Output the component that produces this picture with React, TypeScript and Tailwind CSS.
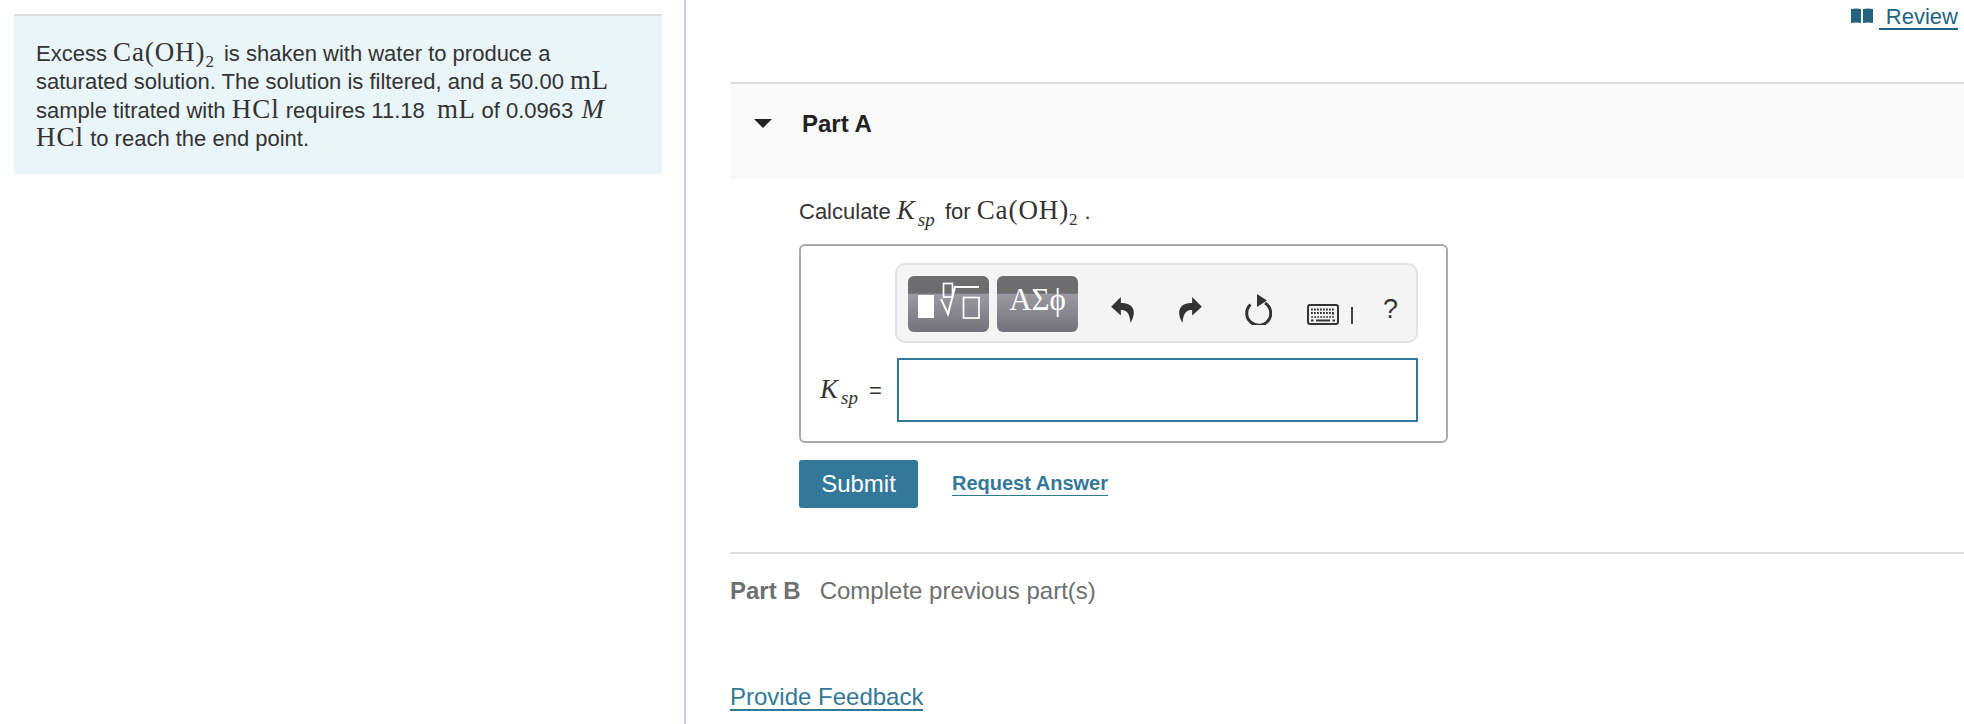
const Serif = ({ children, className = '' }: { children: React.ReactNode; className?: string }) => (
    <span className={`font-['Liberation_Serif',serif] leading-none ${className}`}>{children}</span>
)

const CaOH2 = () => (
    <Serif className="text-[27px] tracking-[0.9px]">
        Ca(OH)<sub className="text-[17px] align-[-2px] leading-none">2</sub>
    </Serif>
)

const Ksp = () => (
    <Serif className="italic text-[27px]">
        <span className="tracking-[3px]">K</span>
        <sub className="text-[19px] align-[-2px] leading-none">sp</sub>
    </Serif>
)

const Undo = ({ flip = false }: { flip?: boolean }) => (
    <svg viewBox="0 0 24 26" width="26" height="28" className={flip ? '-scale-x-100' : ''}>
        <path
            d="M10 1 L1 10 L10 18 V13 C15 13 18 15 19 25 C22.5 19 23 14 20.5 10.5 C18.5 7.5 14.5 6.5 10 6.5 Z"
            fill="#333"
        />
    </svg>
)

const Refresh = () => (
    <svg viewBox="0 0 28 32" width="28" height="32" fill="none">
        <path d="M6.5 11.5 A12 12 0 1 0 21 10" stroke="#333" strokeWidth="3" />
        <path d="M13 1 L23 7.5 L13 14 Z" fill="#333" />
    </svg>
)

const Keyboard = () => (
    <svg viewBox="0 0 32 21" width="32" height="21" fill="none">
        <rect x="1" y="1" width="30" height="19" rx="2" stroke="#333" strokeWidth="2" />
        <path d="M4 5.5 H28 M4 9 H28" stroke="#333" strokeWidth="1.8" strokeDasharray="1.8 1.2" />
        <path d="M26 9 V13 H4" stroke="#333" strokeWidth="1.6" strokeDasharray="1.8 1.2" />
        <path d="M9 16.5 H23 M4 16.5 H6.5 M25.5 16.5 H28" stroke="#333" strokeWidth="1.8" />
    </svg>
)

const Templates = () => (
    <svg viewBox="0 0 81 56" width="81" height="56" fill="none">
        <rect x="10" y="19" width="16" height="23" fill="#fff" />
        <rect x="35.5" y="7.5" width="9" height="13.5" stroke="#fff" strokeWidth="1.7" />
        <path d="M33 23 L40 38 L47 11 H71" stroke="#fff" strokeWidth="2" />
        <rect x="55.5" y="21.5" width="15.5" height="20.5" stroke="#fff" strokeWidth="1.7" />
    </svg>
)

const toolButton =
    'mt-[2px] flex h-[56px] w-[81px] rounded-[6px] bg-[linear-gradient(#6d6d70_0%,#6d6d70_31%,#9b9aa3_32%,#73737a_100%)]'

const App = () => (
    <div className="flex h-[724px] w-[1964px] overflow-hidden bg-white font-['Liberation_Sans',Arial,sans-serif] text-[22px] text-[#333]">
        <div className="w-[686px] shrink-0 border-r-2 border-[#c2d0e2] pl-[14px] pr-[22px] pt-[14px]">
            <div className="h-[160px] border-t-[2px] border-[#dddddd] bg-[#e9f5f8] pl-[22px] pt-[23px] leading-[28.4px] whitespace-nowrap">
                <p className="h-[28.4px]">
                    Excess <CaOH2 /> <span className="ml-[3px]">is shaken with water to produce a</span>
                </p>
                <p className="h-[28.4px]">
                    saturated solution. The solution is filtered, and a 50.00{' '}
                    <Serif className="text-[27px] tracking-[0.5px]">mL</Serif>
                </p>
                <p className="h-[28.4px]">
                    sample titrated with <Serif className="text-[27px] tracking-[1px]">HCl</Serif> requires 11.18{' '}
                    <Serif className="ml-[6px] text-[27px] tracking-[0.5px]">mL</Serif> of 0.0963{' '}
                    <Serif className="ml-[2px] italic text-[27px] tracking-[1px]">M</Serif>
                </p>
                <p className="h-[28.4px]">
                    <Serif className="text-[27px] tracking-[1px]">HCl</Serif> to reach the end point.
                </p>
            </div>
        </div>

        <div className="flex min-w-0 flex-1 flex-col">
            <div className="flex h-[82px] justify-end pr-[6px] pt-[6px]">
                <a className="flex h-[24px] items-center border-b-2 border-[#1f6482] text-[#1f6482] leading-none">
                    <svg viewBox="0 0 22 16" width="22" height="16" className="absolute -ml-[28px] mb-[3px]">
                        <path d="M0 1 Q5 0 10 1 V15 Q5 14 0 15 Z M12 1 Q17 0 22 1 V15 Q17 14 12 15 Z" fill="#24627e" />
                    </svg>
                    <span className="pl-[7px]">Review</span>
                </a>
            </div>

            <div className="ml-[44px] flex h-[97px] items-start border-t-2 border-[#dddddd] bg-[#f9f9f9] pl-[24px] pt-[22px] text-[24px]">
                <svg viewBox="0 0 18 9" width="18" height="9" className="mt-[13px]">
                    <path d="M0 0 H18 L9 9 Z" fill="#222" />
                </svg>
                <span className="ml-[30px] font-bold text-[#222]">Part A</span>
            </div>

            <div className="ml-[113px] w-[649px]">
                <p className="mt-[15px] h-[36px] leading-[36px] whitespace-nowrap">
                    Calculate <Ksp /> <span className="ml-1">for</span> <CaOH2 /> .
                </p>
                <div className="mt-[14px] h-[199px] rounded-[6px] border-2 border-[#aaaaaa] pl-[94px] pr-[28px] pt-[17px]">
                    <div className="flex h-[80px] items-center rounded-[10px] border-2 border-[#e2e2e2] bg-[#f4f4f4] pl-[11px]">
                        <div className={toolButton}>
                            <Templates />
                        </div>
                        <div
                            className={`${toolButton} ml-[8px] justify-center pt-[8px] font-['Liberation_Serif',serif] text-[31px] leading-[32px] text-white`}
                        >
                            ΑΣϕ
                        </div>
                        <div className="ml-[32px] mt-[14px]">
                            <Undo />
                        </div>
                        <div className="ml-[41px] mt-[14px]">
                            <Undo flip />
                        </div>
                        <div className="ml-[41px] mt-[11px]">
                            <Refresh />
                        </div>
                        <div className="ml-[35px] mt-[22px]">
                            <Keyboard />
                        </div>
                        <div className="ml-[12px] mt-[24px] h-[17px] w-[2px] bg-[#444]" />
                        <span className="ml-[30px] mt-[12px] text-[27px]">?</span>
                    </div>
                    <div className="-ml-[78px] mt-[15px] flex items-center">
                        <span className="w-[80px] whitespace-nowrap pl-[3px] leading-[28px]">
                            <Ksp /> <span className="ml-[5px]">=</span>
                        </span>
                        <div className="h-[64px] flex-1 border-2 border-[#337899] bg-white" />
                    </div>
                </div>

                <div className="mt-[17px] flex items-center">
                    <button
                        type="button"
                        className="h-[48px] w-[119px] rounded-[3px] bg-[#337899] text-[24px] text-white"
                    >
                        Submit
                    </button>
                    <a className="ml-[34px] border-b border-[#337899] text-[20px] font-bold leading-[23px] text-[#337899]">
                        Request Answer
                    </a>
                </div>
            </div>

            <div className="ml-[44px] mt-[44px] flex h-[80px] items-start border-t-2 border-[#dddddd] pt-[23px] text-[24px] leading-[28px] text-[#6c7070]">
                <span className="font-bold">Part B</span>
                <span className="ml-[19px]">Complete previous part(s)</span>
            </div>

            <div className="ml-[44px] mt-[49px]">
                <a className="inline-block border-b-2 border-[#337899] text-[24px] leading-[25px] text-[#337899]">
                    Provide Feedback
                </a>
            </div>
        </div>
    </div>
)

export default App
